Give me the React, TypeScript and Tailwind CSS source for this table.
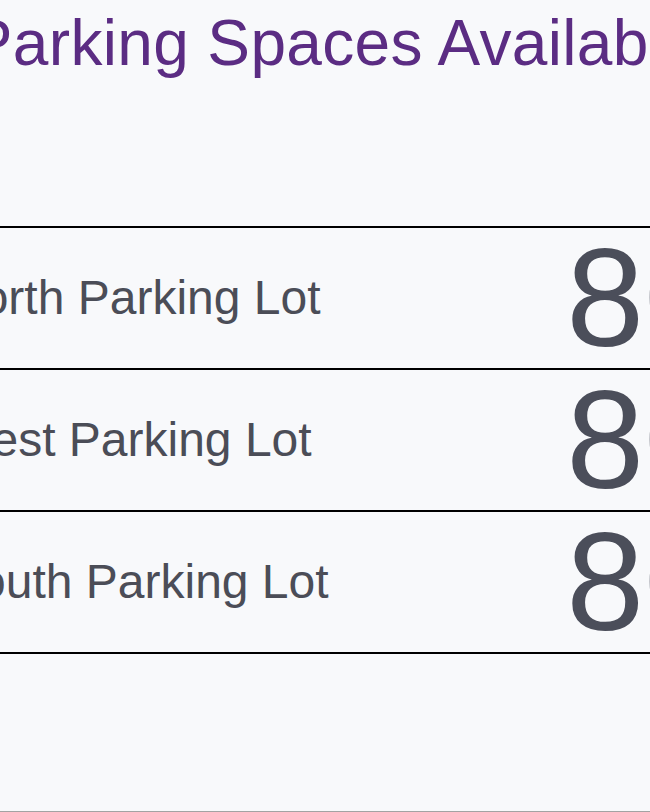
import React from 'react';

const lots = [
  { name: 'North Parking Lot', spaces: 80 },
  { name: 'West Parking Lot', spaces: 80 },
  { name: 'South Parking Lot', spaces: 80 },
];

export default function App() {
  return (
    <div className="w-[650px] h-[812px] overflow-hidden bg-[#f8f9fb] border-b border-[#a3a3a3] box-border font-['Liberation_Sans',Arial,sans-serif]">
      <div className="w-[807px] ml-[-69px] flex flex-col">
        {/* Header */}
        <h1 className="h-[226px] pt-[11px] text-center text-[64px] leading-none font-normal tracking-[0.35px] text-[#5b2c83] whitespace-nowrap">
          Parking Spaces Available
        </h1>

        {/* Lots */}
        <div className="border-t-2 border-black">
          {lots.map((lot) => (
            <div
              key={lot.name}
              className="h-[142px] box-border border-b-2 border-black flex items-center justify-between pl-4 pr-4"
            >
              <span className="text-[48px] leading-none text-[#4b4d57] whitespace-nowrap">{lot.name}</span>
              <span className="text-[140px] leading-none text-[#4b4e5a]">{lot.spaces}</span>
            </div>
          ))}
        </div>
      </div>
    </div>
  );
}
